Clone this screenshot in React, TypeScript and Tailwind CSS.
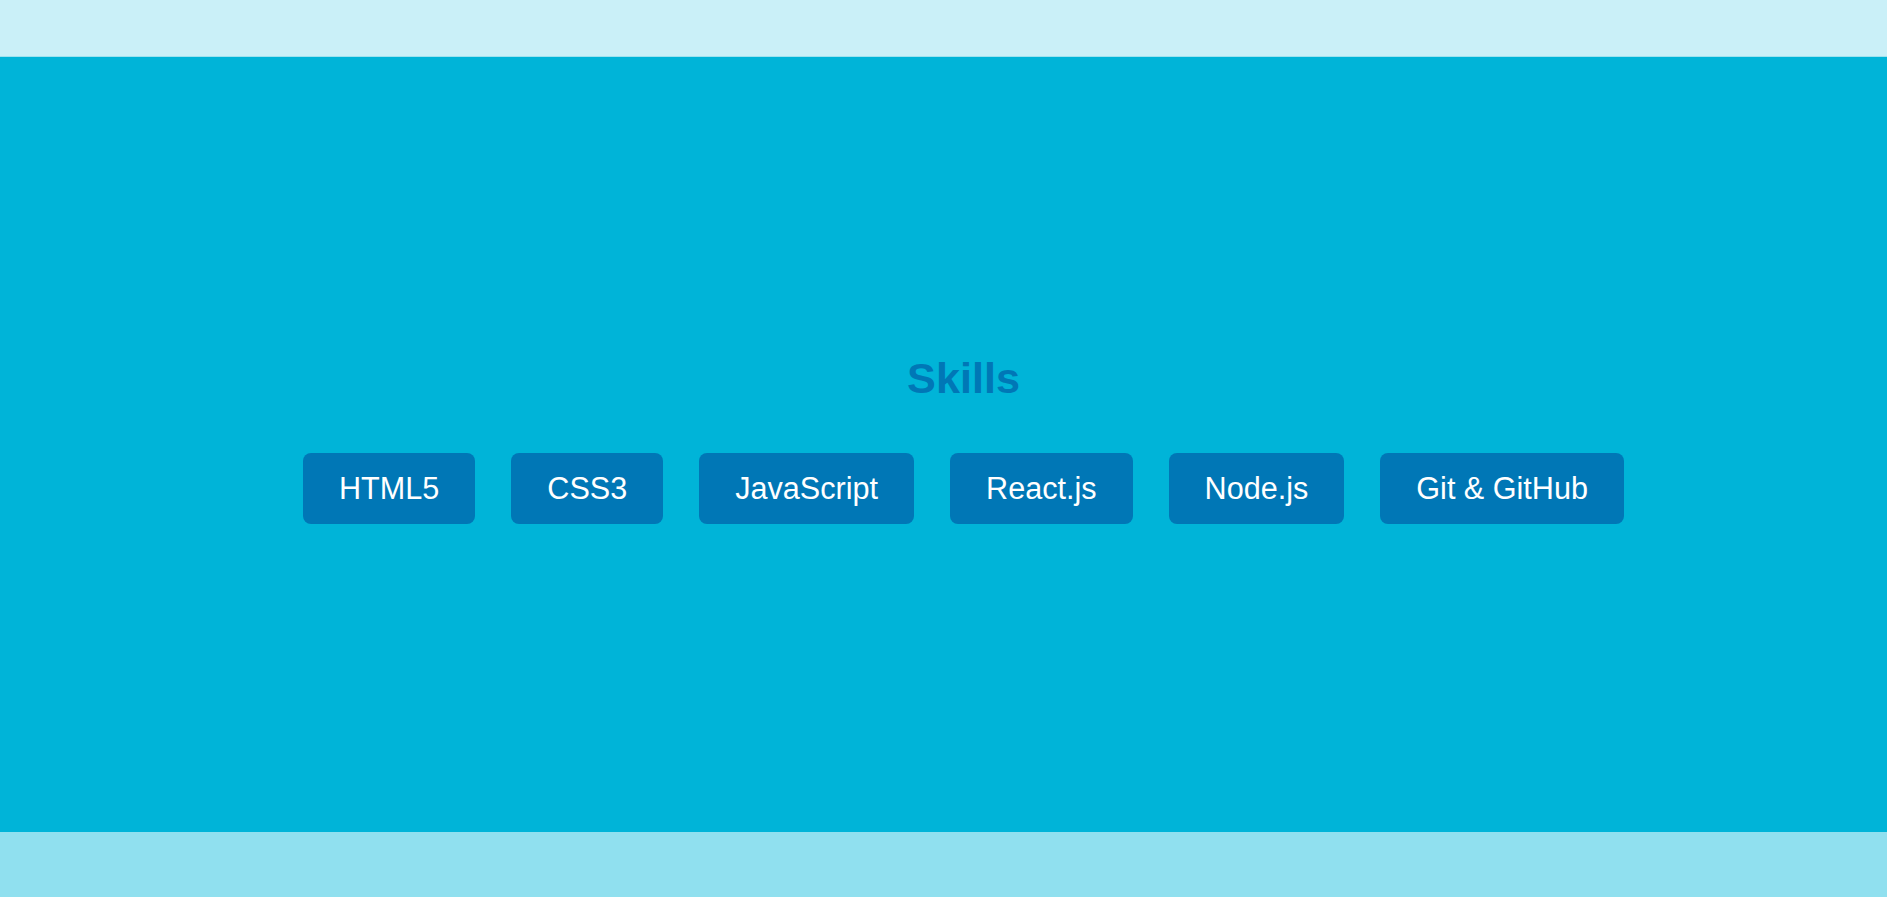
const skills = ["HTML5", "CSS3", "JavaScript", "React.js", "Node.js", "Git & GitHub"];

export default function App() {
  return (
    <div className="min-h-screen flex flex-col bg-[#90e0ef] font-['Liberation_Sans',Arial,sans-serif]">
      {/* top strip */}
      <header className="h-[57px] bg-[#caf0f8] border-b border-[#9fe2ef]" />

      {/* skills section */}
      <section className="h-[775px] bg-[#00b4d8] flex flex-col items-center justify-center pl-[40px] pb-[11px]">
        <h2 className="text-[43.2px] leading-[1.15] font-bold text-[#0077b6] mb-[49px]">Skills</h2>
        <div className="flex flex-wrap justify-center gap-[36px]">
          {skills.map((skill) => (
            <div
              key={skill}
              className="bg-[#0077b6] text-white text-[30.6px] leading-[1.15] px-[36px] py-[18px] rounded-[8px]"
            >
              {skill}
            </div>
          ))}
        </div>
      </section>

      <footer className="flex-1 bg-[#90e0ef]" />
    </div>
  );
}
